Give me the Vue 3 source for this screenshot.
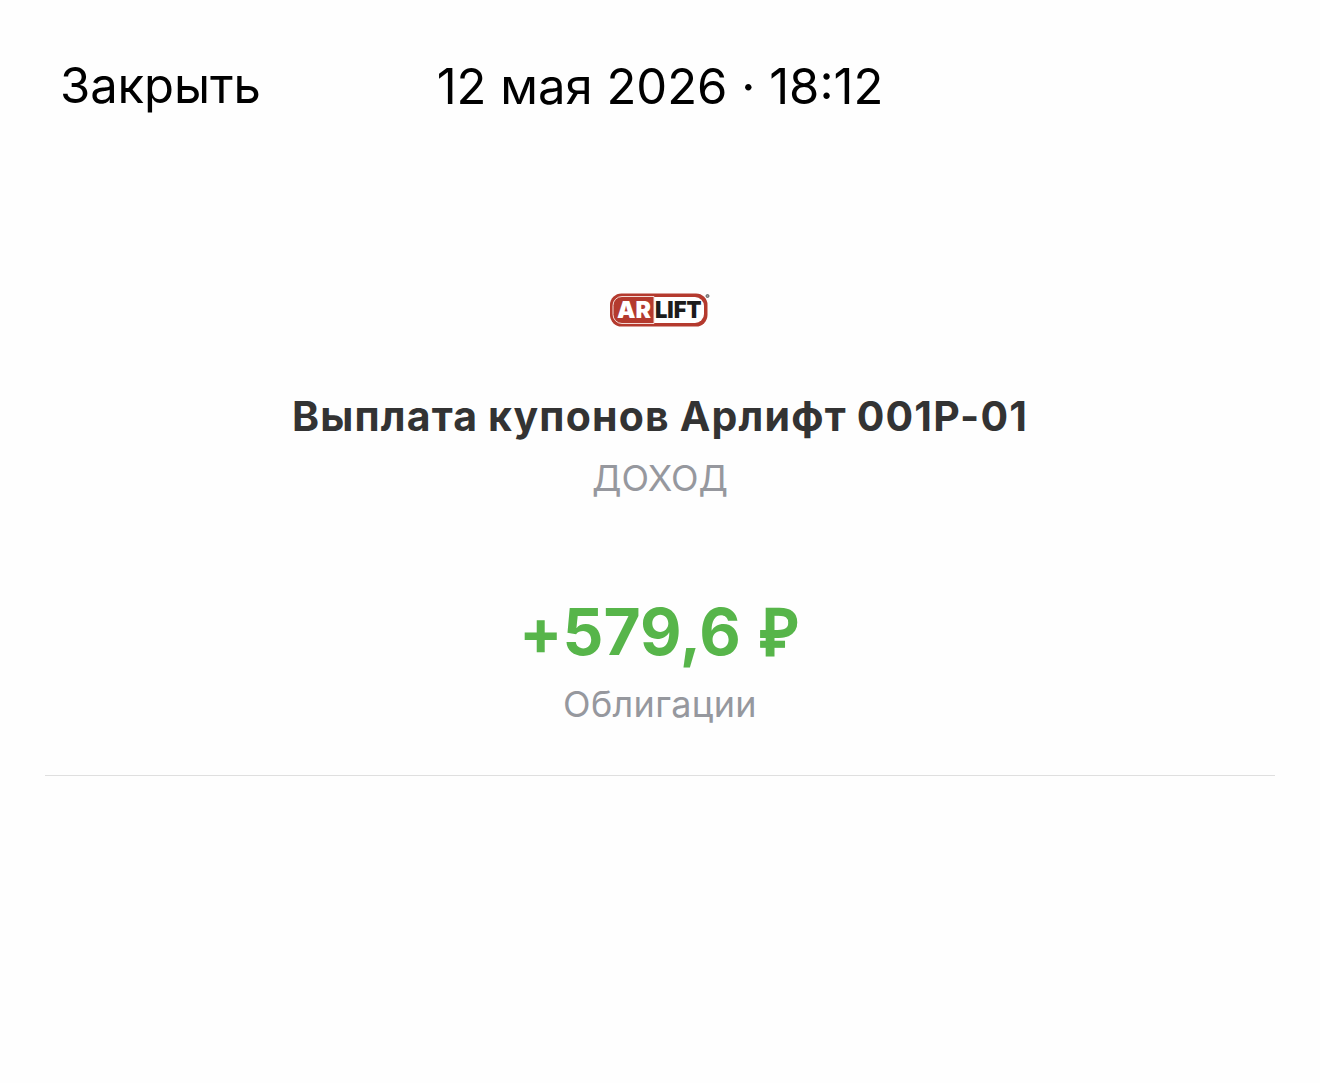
<template>
    <div class="operation">
        <header class="header">
            <button class="close-btn">{{ closeLabel }}</button>
            <div class="date">{{ operation.date }}</div>
        </header>

        <main class="content">
            <svg class="logo" viewBox="0 0 104 36">
                <rect x="1" y="1.500" width="97.500" height="33" rx="11.500" fill="#b43a2e" />
                <path d="M45 5H86a9 9 0 0 1 9 9V22a9 9 0 0 1-9 9H45z" fill="#fff" />
                <path d="M45 4.500H13a9 9 0 0 0-9 9V22.500a9 9 0 0 0 9 9H45z" fill="none" stroke="#f3d9d5" stroke-width="1" />
                <text x="8" y="26.300" textLength="34" lengthAdjust="spacingAndGlyphs" class="logo-text logo-text-light">AR</text>
                <text x="46" y="26.300" textLength="46.500" lengthAdjust="spacingAndGlyphs" class="logo-text">LIFT</text>
                <circle cx="98.500" cy="4" r="1.500" fill="#999" stroke="#666" />
            </svg>

            <h1 class="title">{{ operation.title }}</h1>
            <div class="kind">{{ operation.kind }}</div>
            <div class="amount">{{ operation.amount }} <span class="currency">₽</span></div>
            <div class="category">{{ operation.category }}</div>
        </main>
    </div>
</template>

<script setup>
const closeLabel = 'Закрыть'

const operation = {
    date: '12 мая 2026 · 18:12',
    title: 'Выплата купонов Арлифт 001Р-01',
    kind: 'ДОХОД',
    amount: '+579,6',
    category: 'Облигации'
}
</script>

<style>
body {
    background: #fefefe;
}
</style>

<style scoped>
.operation {
    min-height: 1083px;
    padding: 0 45px;
    box-sizing: border-box;
    font-family: Inter, "Liberation Sans", sans-serif;
    background: #fefefe;
}

.header {
    display: grid;
    grid-template-columns: 1fr auto 1fr;
    align-items: center;
    padding: 56px 15px 0;
    height: 60px;
    color: #000;
    font-size: 49px;
    line-height: 60px;
}

.close-btn {
    justify-self: start;
    padding: 0 0 2px;
    border: none;
    background: none;
    color: inherit;
    font: inherit;
    letter-spacing: -0.1px;
    cursor: pointer;
}

.date {
    white-space: nowrap;
}

.content {
    display: flex;
    flex-direction: column;
    align-items: center;
    height: 659px;
    border-bottom: 1px solid #dfdfdf;
    text-align: center;
    white-space: nowrap;
}

.logo {
    width: 104px;
    height: 36px;
    margin: 176px 0 0 2px;
}

.logo-text {
    font-family: Inter, sans-serif;
    font-size: 23px;
    font-weight: 900;
    fill: #1c1c1c;
}

.logo-text-light {
    fill: #fff;
}

.title {
    margin: 61px 0 0;
    color: #333;
    font-size: 41px;
    font-weight: 700;
    line-height: 54px;
    letter-spacing: 1.18px;
    word-spacing: -1px;
    font-feature-settings: "calt" 0;
}

.kind {
    margin-top: 8px;
    color: #96989e;
    font-size: 36px;
    line-height: 54px;
}

.amount {
    margin-top: 87px;
    color: #57b54a;
    font-size: 64px;
    font-weight: 700;
    line-height: 80px;
    font-feature-settings: "calt" 0;
}

.currency {
    margin: 0 3px 0 5px;
    font-family: "Liberation Sans", sans-serif;
    -webkit-text-stroke: 1px #57b54a;
}

.category {
    margin-top: 9px;
    color: #96989e;
    font-size: 36px;
    line-height: 44px;
    letter-spacing: 0.35px;
}
</style>
